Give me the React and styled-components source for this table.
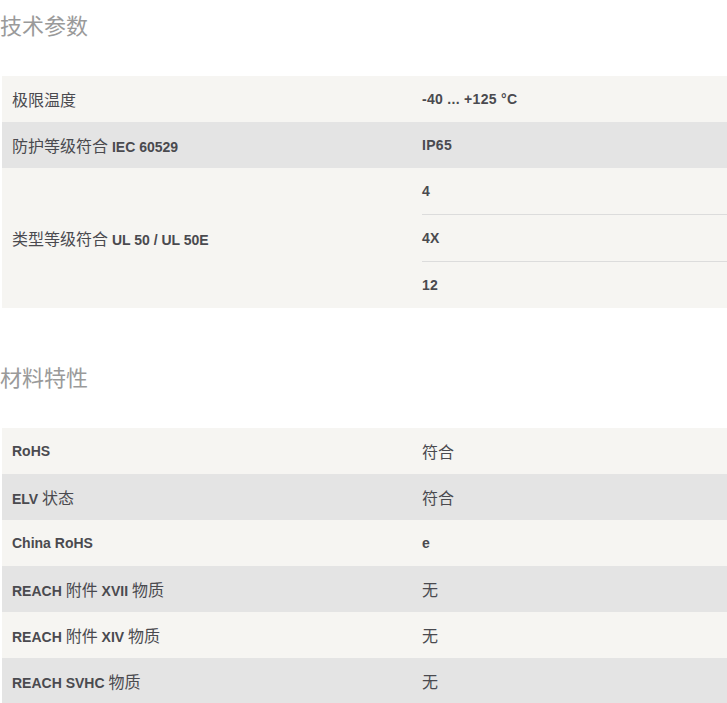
import React from "react";
import styled, { createGlobalStyle } from "styled-components";

const GlobalStyle = createGlobalStyle`
  body {
    margin: 0;
    background: #fff;
    font-family: "Liberation Sans", "Noto Sans CJK SC", sans-serif;
  }
`;

const Page = styled.div`
  width: 727px;
`;

const Heading = styled.h2`
  margin: 9px 0 37px 0;
  font-size: 22px;
  line-height: 30px;
  font-weight: 400;
  color: #9a9a9a;
  font-family: "Noto Sans CJK SC", sans-serif;

  & + div {
    margin-bottom: 53px;
  }
`;

const Table = styled.div`
  margin-left: 2px;
  display: flex;
  flex-direction: column;
`;

const Row = styled.div`
  display: grid;
  grid-template-columns: 410px 1fr;
  background: ${(p) => (p.$dark ? "#e4e4e4" : "#f6f5f2")};
  color: #4a4a4f;
  font-size: 14px;
`;

const Label = styled.div`
  display: flex;
  align-items: center;
  padding-left: 10px;
  min-height: 46px;
  font-weight: 700;
`;

const Values = styled.div`
  padding-left: 10px;
  display: flex;
  flex-direction: column;
`;

const Value = styled.div`
  height: 46px;
  display: flex;
  align-items: center;
  font-weight: 700;
  letter-spacing: 0.3px;
  & + & {
    border-top: 1px solid #dcdcdc;
  }
`;

const Cjk = styled.span`
  font-family: "Noto Sans CJK SC", sans-serif;
  font-size: 16px;
  font-weight: 400;
  letter-spacing: 0;
`;

function Mixed({ text }) {
  const parts = text.split(/([\u3400-\u9fff]+)/);
  return (
    <span>
      {parts.map((p, i) =>
        /[\u3400-\u9fff]/.test(p) ? <Cjk key={i}>{p}</Cjk> : <React.Fragment key={i}>{p}</React.Fragment>
      )}
    </span>
  );
}

const tech = [
  { label: "极限温度", values: ["-40 ... +125 °C"] },
  { label: "防护等级符合 IEC 60529", values: ["IP65"] },
  { label: "类型等级符合 UL 50 / UL 50E", values: ["4", "4X", "12"] },
];

const material = [
  { label: "RoHS", values: ["符合"] },
  { label: "ELV 状态", values: ["符合"] },
  { label: "China RoHS", values: ["e"] },
  { label: "REACH 附件 XVII 物质", values: ["无"] },
  { label: "REACH 附件 XIV 物质", values: ["无"] },
  { label: "REACH SVHC 物质", values: ["无"] },
];

function SpecTable({ rows }) {
  return (
    <Table>
      {rows.map((r, i) => (
        <Row key={r.label} $dark={i % 2 === 1}>
          <Label>
            <Mixed text={r.label} />
          </Label>
          <Values>
            {r.values.map((v) => (
              <Value key={v}>
                <Mixed text={v} />
              </Value>
            ))}
          </Values>
        </Row>
      ))}
    </Table>
  );
}

export default function App() {
  return (
    <Page>
      <GlobalStyle />
      <Heading>技术参数</Heading>
      <SpecTable rows={tech} />
      <Heading>材料特性</Heading>
      <SpecTable rows={material} />
    </Page>
  );
}
